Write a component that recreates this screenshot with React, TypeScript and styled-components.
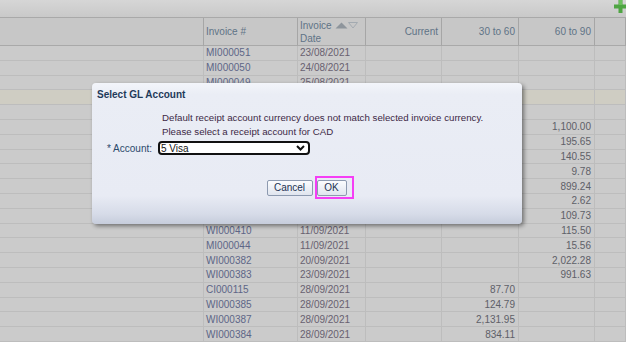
import React from "react";
import styled, { createGlobalStyle } from "styled-components";

const GlobalStyle = createGlobalStyle`
  html, body { margin: 0; padding: 0; }
  body {
    background: #c9c9c9;
    font-family: "Liberation Sans", Arial, sans-serif;
  }
`;

const Page = styled.div`
  position: relative;
  width: 626px;
  height: 342px;
  overflow: hidden;
  background: #cacaca;
`;

const TopBar = styled.div`
  height: 17px;
  border-bottom: 1px solid #a9a9a9;
  background: linear-gradient(to bottom, #d6d6d6, #c9c9c9);
  display: flex;
  justify-content: flex-end;
  align-items: flex-start;
`;

const Plus = styled.svg`
  display: block;
  margin-right: -1px;
`;

const Table = styled.div`
  display: grid;
  grid-template-columns: 204px 94px 68px 76px 77px 76px 1fr;
  grid-auto-rows: 14.8px;
`;

const HeadWrap = styled.div`
  display: grid;
  grid-template-columns: 204px 94px 68px 76px 77px 76px 1fr;
`;

const HeadCell = styled.div<{ $right?: boolean }>`
  height: 28px;
  box-sizing: border-box;
  border-right: 1px solid #a6a6a6;
  border-bottom: 1px solid #a9a9a9;
  background: #c7c7c7;
  color: #5f7386;
  font-size: 10px;
  line-height: 13px;
  display: flex;
  align-items: center;
  justify-content: ${(p) => (p.$right ? "flex-end" : "flex-start")};
  padding: 0 ${(p) => (p.$right ? "3px" : "0")} 0 2px;
`;

const DateHead = styled.div`
  display: flex;
  flex-direction: column;
`;

const SortLine = styled.div`
  display: flex;
  align-items: center;
  gap: 3px;
`;

const Cell = styled.div<{ $right?: boolean; $tan?: boolean; $color?: string }>`
  box-sizing: border-box;
  border-right: 1px solid #bdbdbd;
  border-bottom: 1px solid #bdbdbd;
  background: ${(p) => (p.$tan ? "#cfcdc3" : "#cbcbcb")};
  color: ${(p) => p.$color || "#5e6068"};
  font-size: 10px;
  display: flex;
  align-items: center;
  justify-content: ${(p) => (p.$right ? "flex-end" : "flex-start")};
  padding: 0 ${(p) => (p.$right ? "3px" : "0")} 0 2px;
  white-space: nowrap;
  overflow: hidden;
`;

const Dialog = styled.div`
  position: absolute;
  left: 92px;
  top: 83px;
  width: 430px;
  height: 141px;
  box-sizing: border-box;
  border-radius: 4px;
  background: linear-gradient(
    to bottom,
    #f3f5fa 0%,
    #eaedf5 8%,
    #e8ebf4 80%,
    #d6dbe8 93%,
    #c6ccdb 100%
  );
  box-shadow: 2px 2px 4px rgba(0, 0, 0, 0.45);
  padding: 5px 5px 0 5px;
  display: flex;
  flex-direction: column;
`;

const Title = styled.div`
  font-weight: bold;
  font-size: 10px;
  line-height: 14px;
  color: #1f3a5a;
`;

const Message = styled.div`
  margin: 9px 0 0 65px;
  font-size: 9.7px;
  line-height: 14px;
  color: #3d2845;
`;

const FieldRow = styled.div`
  margin: 2px 0 0 10px;
  display: flex;
  align-items: center;
  gap: 6px;
  font-size: 10px;
  color: #2b4a6c;
`;

const Label = styled.span`
  white-space: pre;
`;

const SelectBox = styled.div`
  width: 152px;
  height: 14px;
  box-sizing: border-box;
  border: 2px solid #111;
  border-radius: 4px;
  background: #fff;
  color: #161616;
  font-size: 10px;
  display: flex;
  align-items: center;
  justify-content: space-between;
  padding: 0 3px 0 1px;
`;

const Buttons = styled.div`
  margin-top: 25px;
  display: flex;
  justify-content: center;
  gap: 4px;
  padding-right: 1px;
`;

const Button = styled.button<{ $w: number }>`
  width: ${(p) => p.$w}px;
  height: 16px;
  box-sizing: border-box;
  border: 1px solid #8d9ab0;
  border-radius: 2px;
  background: linear-gradient(to bottom, #fbfcfe, #e0e5ef);
  color: #1d3453;
  font-family: "Liberation Sans", Arial, sans-serif;
  font-size: 10px;
  padding: 0;
  line-height: 14px;
`;

const Highlight = styled.div`
  position: absolute;
  left: 223px;
  top: 93px;
  width: 39px;
  height: 23px;
  box-sizing: border-box;
  border: 2px solid #f53ef5;
  pointer-events: none;
`;

type Row = {
  inv?: string;
  date?: string;
  cur?: string;
  c30?: string;
  c60?: string;
  tan?: boolean;
};

const rows: Row[] = [
  { inv: "MI000051", date: "23/08/2021" },
  { inv: "MI000050", date: "24/08/2021" },
  { inv: "MI000049", date: "25/08/2021" },
  { tan: true },
  {},
  { c60: "1,100.00" },
  { c60: "195.65" },
  { c60: "140.55" },
  { c60: "9.78" },
  { c60: "899.24" },
  { c60: "2.62" },
  { c60: "109.73" },
  { inv: "WI000410", date: "11/09/2021", c60: "115.50" },
  { inv: "MI000044", date: "11/09/2021", c60: "15.56" },
  { inv: "WI000382", date: "20/09/2021", c60: "2,022.28" },
  { inv: "WI000383", date: "23/09/2021", c60: "991.63" },
  { inv: "CI000115", date: "28/09/2021", c30: "87.70" },
  { inv: "WI000385", date: "28/09/2021", c30: "124.79" },
  { inv: "WI000387", date: "28/09/2021", c30: "2,131.95" },
  { inv: "WI000384", date: "28/09/2021", c30: "834.11" },
];

export default function App() {
  return (
    <>
      <GlobalStyle />
      <Page>
        <TopBar>
          <Plus width="13" height="13" viewBox="0 0 13 13">
            <rect x="4.5" y="0" width="4" height="13" fill="#4fa543" />
            <rect x="0" y="4.5" width="13" height="4" fill="#4fa543" />
            <rect x="5" y="0" width="3" height="5" fill="#6cc05e" />
          </Plus>
        </TopBar>
        <HeadWrap>
          <HeadCell />
          <HeadCell>Invoice #</HeadCell>
          <HeadCell>
            <DateHead>
              <SortLine>
                <span>Invoice</span>
                <svg width="24" height="7" viewBox="0 0 24 7">
                  <polygon points="0.5,6.5 6.5,0.5 12.5,6.5" fill="#8e959c" />
                  <polygon
                    points="13.5,0.5 22.5,0.5 18,6"
                    fill="none"
                    stroke="#a3aab1"
                    strokeWidth="1"
                  />
                </svg>
              </SortLine>
              <span>Date</span>
            </DateHead>
          </HeadCell>
          <HeadCell $right>Current</HeadCell>
          <HeadCell $right>30 to 60</HeadCell>
          <HeadCell $right>60 to 90</HeadCell>
          <HeadCell />
        </HeadWrap>
        <Table>
          {rows.map((r, i) => (
            <React.Fragment key={i}>
              <Cell $tan={r.tan} />
              <Cell $tan={r.tan} $color="#5d6687">
                {r.inv}
              </Cell>
              <Cell $tan={r.tan} $color="#686170">
                {r.date}
              </Cell>
              <Cell $tan={r.tan} $right>
                {r.cur}
              </Cell>
              <Cell $tan={r.tan} $right>
                {r.c30}
              </Cell>
              <Cell $tan={r.tan} $right>
                {r.c60}
              </Cell>
              <Cell $tan={r.tan} />
            </React.Fragment>
          ))}
        </Table>
        <Dialog role="dialog" aria-label="Select GL Account">
          <Title>Select GL Account</Title>
          <Message>
            Default receipt account currency does not match selected invoice currency.
            <br />
            Please select a receipt account for CAD
          </Message>
          <FieldRow>
            <Label>* Account:</Label>
            <SelectBox>
              <span>5 Visa</span>
              <svg width="9" height="6" viewBox="0 0 9 6">
                <polyline
                  points="1,1 4.5,4.5 8,1"
                  fill="none"
                  stroke="#111"
                  strokeWidth="2"
                />
              </svg>
            </SelectBox>
          </FieldRow>
          <Buttons>
            <Button $w={46}>Cancel</Button>
            <Button $w={30}>OK</Button>
          </Buttons>
          <Highlight />
        </Dialog>
      </Page>
    </>
  );
}
